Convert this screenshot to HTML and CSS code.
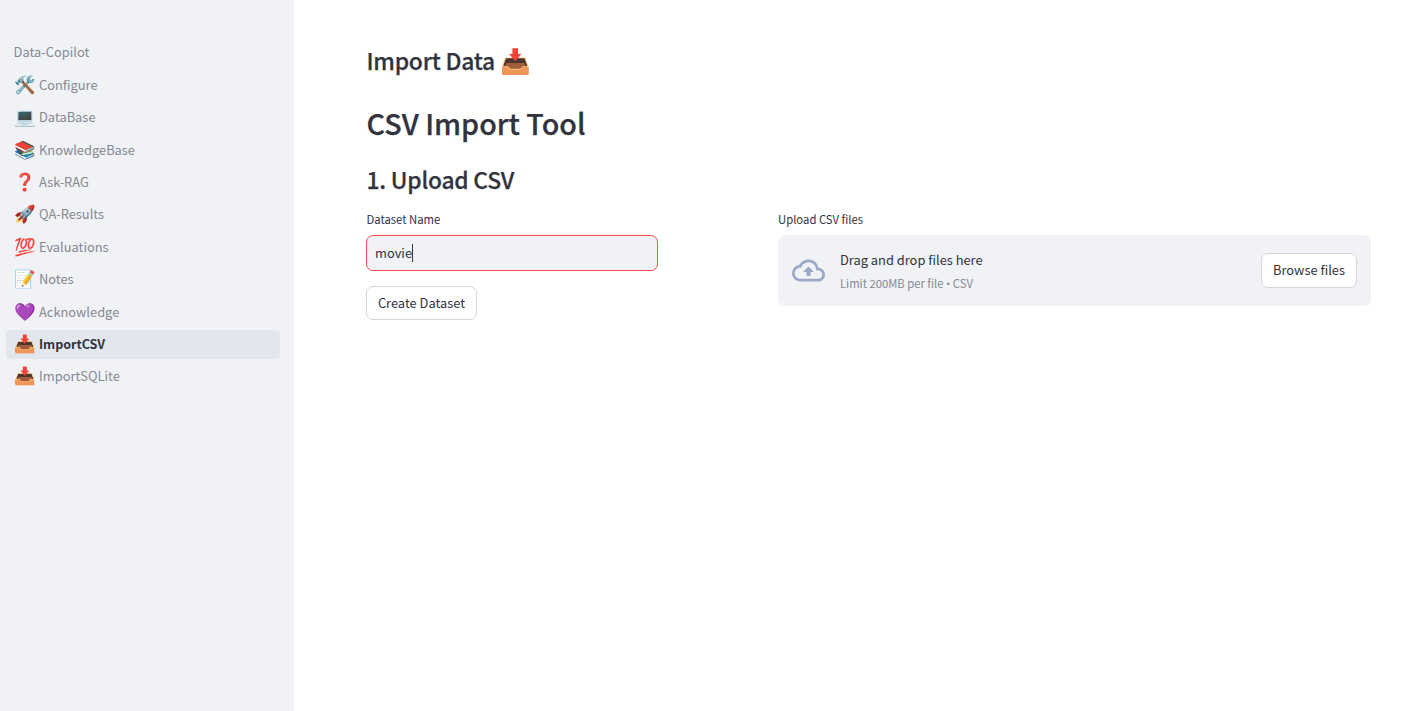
FILE: index.html
```html
<!DOCTYPE html>
<html lang="en">
<head>
<meta charset="utf-8">
<title>Data-Copilot</title>
<link rel="stylesheet" href="styles.css">
</head>
<body>
<div class="app">
  <nav class="sidebar">
    <a class="item root">Data-Copilot</a>
    <a class="item"><span class="emoji">🛠️</span><span>Configure</span></a>
    <a class="item"><span class="emoji">💻</span><span>DataBase</span></a>
    <a class="item"><span class="emoji">📚</span><span>KnowledgeBase</span></a>
    <a class="item"><span class="emoji">❓</span><span>Ask-RAG</span></a>
    <a class="item"><span class="emoji">🚀</span><span>QA-Results</span></a>
    <a class="item"><span class="emoji">💯</span><span>Evaluations</span></a>
    <a class="item"><span class="emoji">📝</span><span>Notes</span></a>
    <a class="item"><span class="emoji">💜</span><span>Acknowledge</span></a>
    <a class="item active"><span class="emoji">📥</span><span>ImportCSV</span></a>
    <a class="item"><span class="emoji">📥</span><span>ImportSQLite</span></a>
  </nav>
  <main class="main">
    <h2 class="page-title"><span>Import Data</span><span class="emoji">📥</span></h2>
    <h1 class="title">CSV Import Tool</h1>
    <h2 class="section">1. Upload CSV</h2>
    <div class="columns">
      <div class="col-form">
        <label class="label inset">Dataset Name</label>
        <div class="input"><span>movie</span><i class="caret"></i></div>
        <button class="button create">Create Dataset</button>
      </div>
      <div class="col-upload">
        <label class="label">Upload CSV files</label>
        <div class="dropzone">
          <svg class="cloud" viewBox="0 0 24 24"><path d="M19.35 10.04A7.49 7.49 0 0 0 12 4C9.11 4 6.6 5.64 5.35 8.04A5.994 5.994 0 0 0 0 14c0 3.31 2.69 6 6 6h13c2.76 0 5-2.24 5-5 0-2.64-2.05-4.78-4.65-4.96zM19 18H6c-2.21 0-4-1.79-4-4s1.79-4 4-4h.71C7.37 7.69 9.48 6 12 6c3.04 0 5.5 2.46 5.5 5.5v.5H19c1.66 0 3 1.34 3 3s-1.34 3-3 3zM8 13h2.55v3h2.9v-3H16l-4-4z"/></svg>
          <div class="drop-text"><span class="drop-main">Drag and drop files here</span><span class="drop-sub">Limit 200MB per file <span class="bullet">•</span> CSV</span></div>
          <button class="button browse">Browse files</button>
        </div>
      </div>
    </div>
  </main>
</div>
</body>
</html>
```
FILE: styles.css
```css
* { box-sizing: border-box; }
body { margin: 0; background: #fff; color: #31333f; font-family: "Source Sans Pro", "Noto Sans CJK SC", sans-serif; font-size: 12.87px; }
.app { display: flex; height: 711px; overflow: hidden; }
.sidebar { width: 294px; flex: none; background: #f0f2f6; padding: 37.9px 14px 0 6px; display: flex; flex-direction: column; gap: 3.6px; }
.item { display: flex; align-items: center; gap: 4px; height: 28.8px; padding: 0 8px; border-radius: 4px; color: #868892; white-space: nowrap; line-height: 28px; }
.item.root { margin-bottom: 0.1px; padding-left: 7.6px; }
.item.active { height: 29.2px; margin-bottom: -0.4px; background: #e2e7ee; color: #31333f; font-weight: 700; font-size: 12.6px; letter-spacing: -0.07px; }
.emoji { font-family: "Noto Color Emoji", sans-serif; font-weight: 400; -webkit-text-stroke: 0; letter-spacing: 0; }
.item .emoji { width: 21px; font-size: 17.4px; }
.main { flex: 1; padding: 39px 31px 0 72px; }
h1, h2 { margin: 0; font-weight: 500; white-space: nowrap; -webkit-text-stroke: 0.25px #31333f; letter-spacing: -0.25px; padding-left: 0.5px; }
.page-title { display: flex; align-items: center; gap: 5px; height: 43px; font-size: 22.9px; line-height: 43px; }
.page-title .emoji { font-size: 24.5px; padding-top: 2px; }
.title { margin-top: 17.5px; height: 46px; font-size: 28.7px; line-height: 46px; letter-spacing: 0; }
.section { margin-top: 15.5px; height: 38px; font-size: 22.8px; line-height: 38px; letter-spacing: -0.22px; }
.columns { display: flex; margin-top: 12px; }
.col-form { width: 292px; margin-right: 120px; }
.col-upload { width: 593px; }
.label { display: block; height: 18px; margin-bottom: 6px; font-size: 11.3px; line-height: 17px; }
.label.inset { padding-left: 0.5px; }
.input { display: flex; align-items: center; height: 36px; padding: 0 8px 1px; border: 1px solid #ff4b4b; border-radius: 7px; background: #f0f2f6; }
.caret { width: 1px; height: 18px; background: #31333f; }
.button { font: inherit; color: inherit; background: #fff; border: 1px solid #d6d6d9; border-radius: 7px; padding: 0 0 2px; white-space: nowrap; }
.create { display: block; width: 111px; height: 34px; margin-top: 15px; }
.dropzone { display: flex; align-items: center; height: 71px; padding: 0 14px; border-radius: 7px; background: #f0f2f6; }
.cloud { width: 33px; height: 33px; fill: #9ca8c7; margin-right: 15px; }
.drop-text { display: flex; flex-direction: column; flex: 1; padding-top: 1px; }
.drop-main { line-height: 24px; }
.drop-sub { font-size: 11.25px; line-height: 23px; color: #868892; }
.bullet { font-family: "Open Sans", sans-serif; }
.browse { width: 96px; height: 35px; }
```
